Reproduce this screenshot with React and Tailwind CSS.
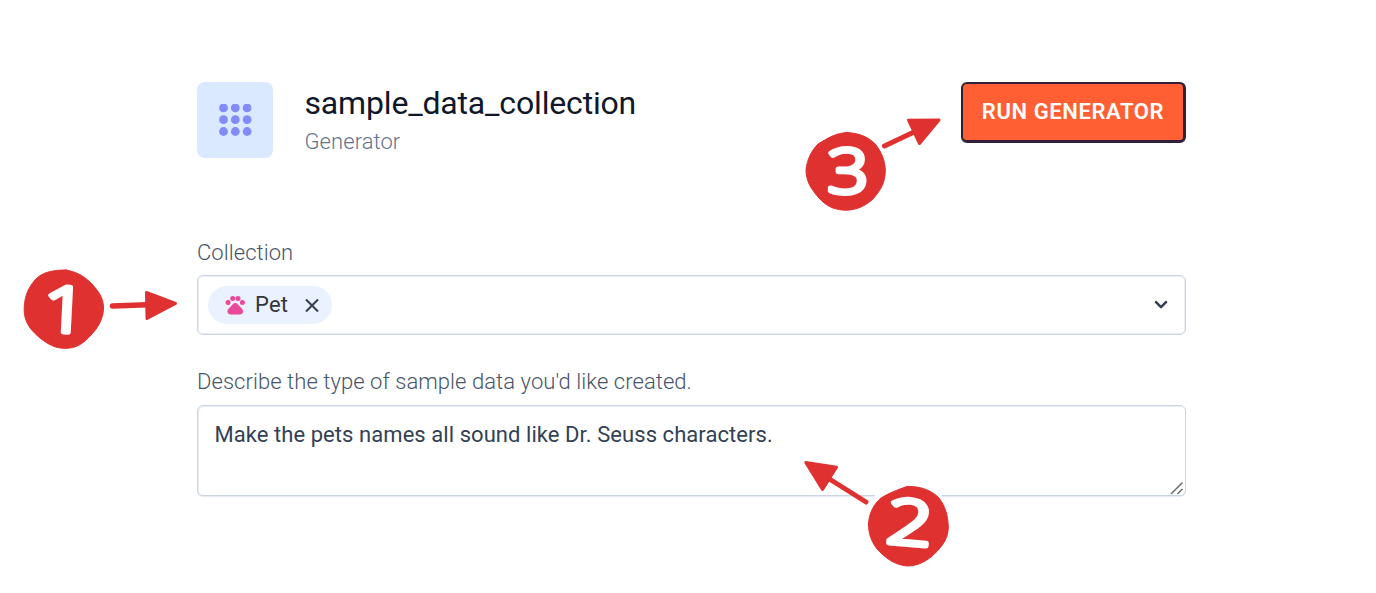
function GridIcon() {
  const stops = [4.5, 16.3, 28.1];
  return (
    <svg width="33" height="33" viewBox="0 0 33 33" className="fill-[#818cf8]">
      {stops.map((y) => stops.map((x) => <circle key={`${x}-${y}`} cx={x} cy={y - 0.6} r="4.4" />))}
    </svg>
  );
}

function PawIcon() {
  return (
    <svg width="22" height="22" viewBox="0 0 22 22" className="fill-[#ec4899]">
      <circle cx="4.100" cy="8.600" r="2.500" />
      <circle cx="8.700" cy="4.600" r="2.500" />
      <circle cx="14" cy="4.600" r="2.500" />
      <circle cx="18.400" cy="8.600" r="2.500" />
      <path d="M11.300 8.900C9 8.900 8.300 10.800 7 12.300C5.400 14 3.200 15.300 3.400 17.600C3.600 19.700 5.200 20.500 6.800 20.500H15.700C17.500 20.500 19 19.600 19.100 17.600C19.200 15.300 17.200 14 15.600 12.300C14.200 10.800 13.600 8.900 11.300 8.900Z" />
    </svg>
  );
}

function Header() {
  return (
    <header className="flex items-start">
      <div className="flex h-[76px] w-[76px] shrink-0 items-center justify-center rounded-lg bg-[#dae9ff]">
        <GridIcon />
      </div>
      <div className="ml-[31.5px] flex-1">
        <h1 className="h-[44px] whitespace-nowrap text-[32px] leading-[42px] tracking-[-0.17px] text-[#0f172a]">
          sample_data_collection
        </h1>
        <p className="text-[22px] font-light leading-[32px] tracking-[0.06px] text-[#64748b]">Generator</p>
      </div>
      <button className="h-[61px] w-[225px] whitespace-nowrap rounded-md border-t-2 border-r-[3px] border-b-[3px] border-l-2 border-[#31203a] bg-[#ff5f32] pb-[2px] text-[22px] font-semibold tracking-[0.6px] text-white">
        RUN GENERATOR
      </button>
    </header>
  );
}

function CollectionField() {
  return (
    <section className="mt-[78px]">
      <label className="block h-[39px] text-[22px] font-light leading-[34px] tracking-[0.06px] text-[#475569]">
        Collection
      </label>
      <div className="flex h-[60px] items-center justify-between rounded-md border border-[#cbd5e1] pl-[10px] pr-[17px] shadow-[inset_0_0_0_1px_#e9eef5]">
        <div className="flex h-[38px] w-[124px] items-center rounded-full bg-[#eaf1ff] pl-4">
          <PawIcon />
          <span className="ml-[9px] w-[33px] text-[22px] leading-[32px] tracking-[0.2px] text-[#333638]">Pet</span>
          <svg width="14" height="14" viewBox="0 0 14 14" className="ml-[17px] overflow-visible stroke-[#334155]" fill="none" strokeWidth="2.1">
            <path d="M1 1.500L13 13.500M13 1.500L1 13.500" />
          </svg>
        </div>
        <svg width="14" height="10" viewBox="0 0 14 10" className="stroke-[#334155]" fill="none" strokeWidth="2.6" strokeLinecap="round" strokeLinejoin="round">
          <path d="M2 2.200L7 7.200L12 2.200" />
        </svg>
      </div>
    </section>
  );
}

function DescriptionField() {
  return (
    <section className="mt-[31px]">
      <label className="block h-[39px] text-[22px] font-light leading-[32px] tracking-[0.06px] text-[#475569]">
        Describe the type of sample data you'd like created.
      </label>
      <div className="relative h-[91px]">
        <textarea
          className="block h-[91px] w-full resize-none rounded-md border border-[#cbd5e1] bg-white px-[16.5px] py-[13px] text-[22px] leading-[32px] tracking-[0.06px] text-[#334155] shadow-[inset_1px_1px_0_#e9eef5,0_1px_0_#e4eaf2] outline-none"
          defaultValue="Make the pets names all sound like Dr. Seuss characters."
        />
        <svg width="14" height="14" viewBox="0 0 14 14" className="absolute right-[2px] bottom-[1px] stroke-[#6b6b6b]" strokeWidth="1.5">
          <path d="M1 13L12.5 1.5M7.5 13L12.5 8" />
        </svg>
      </div>
    </section>
  );
}

function Annotations() {
  return (
    <svg width="1376" height="593" viewBox="0 0 1376 593" className="pointer-events-none absolute inset-0">
      <g fill="#e03131" stroke="#e03131" strokeLinejoin="round" strokeLinecap="round">
        <path strokeWidth="1" d="M66 270C53 270 42 272 35 280C27 289 24 299 24.200 311C24.500 324 33 332 40 338C48 344 54 348 64 348.300C76 349 84 343 91 335C98 328 103 319 103.500 309C104 298 98 291 92 284C84 276 77 272 66 270Z" />
        <path strokeWidth="5.500" fill="none" d="M112.500 306L147 304.800" />
        <path strokeWidth="3" d="M146.500 292.500L175.500 303.500L147 318.500Z" />

        <path strokeWidth="1" stroke="#ffffff" fill="#ffffff" d="M876 490H941V501H876Z" />
        <path strokeWidth="1" d="M907 486.500C922 486 932 491 939 498C945 506 948 515 948.300 527C948.500 540 940 549 931 557C923 563 916 566 907 566C895 565 885 558 877 549C871 541 868.500 533 868.500 524C869 513 874 504 881 498C889 493 897 490 907 486.500Z" />
        <path strokeWidth="5" fill="none" d="M866 502L831 480" />
        <path strokeWidth="3" d="M805.800 462.500L836.500 467.200L822.500 489.500Z" />

        <path strokeWidth="1" d="M847 132.500C860 133 870 138 876 145C882 153 885 161 885.300 170C885.500 184 879 192 873 199C865 206 857 210 846 210.200C834 210 826 206 819 198C811 189 806 181 806 170C807 160 811 151 818 144C828 138 836 133 847 132.500Z" />
        <path strokeWidth="5" fill="none" d="M884.500 146L913 132.500" />
        <path strokeWidth="3" d="M908.500 120.200L939 120L919.500 143.500Z" />
      </g>
      <g
        className="font-['Open_Sans',sans-serif] text-[61px] font-light"
        fill="#ffffff"
        stroke="#ffffff"
        strokeWidth="5"
        strokeLinejoin="round"
        strokeLinecap="round"
        textAnchor="middle"
      >
        <text transform="translate(64 332) rotate(3) scale(1.250 1.030)">1</text>
        <text transform="translate(908 544.500) rotate(5) scale(1.320 1.020)">2</text>
        <text transform="translate(848 193) scale(1.180 0.990)">3</text>
      </g>
    </svg>
  );
}

export default function App() {
  return (
    <main className="relative h-[593px] w-[1376px] overflow-hidden bg-white pt-[82px] pl-[197px] font-[Roboto,sans-serif]">
      <div className="w-[989px]">
        <Header />
        <CollectionField />
        <DescriptionField />
      </div>
      <Annotations />
    </main>
  );
}
